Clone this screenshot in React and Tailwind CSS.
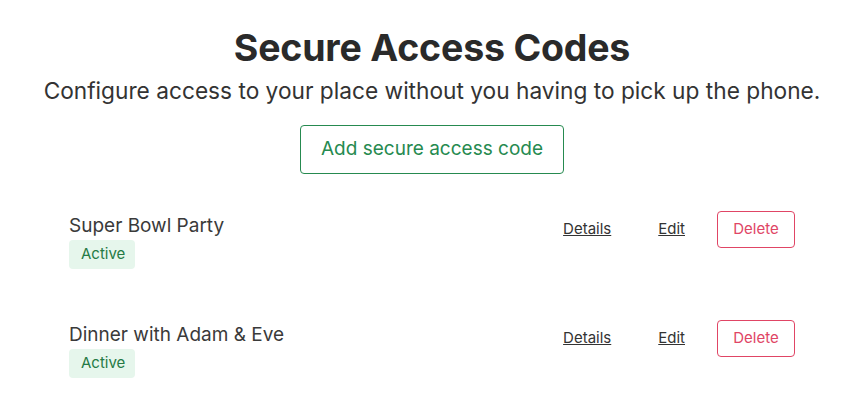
import React from "react";

const codes = [
  { name: "Super Bowl Party", status: "Active" },
  { name: "Dinner with Adam & Eve", status: "Active" },
];

export default function App() {
  return (
    <div
      className="min-h-screen bg-white text-[#333333] pl-[9px]"
      style={{ fontFamily: "Inter, 'Noto Sans', sans-serif" }}
    >
      <div className="flex flex-col items-center pt-[26px]">
        {/* header */}
        <h1 className="text-[37.5px] font-bold leading-[44px] tracking-[-0.2px] text-[#2a2a2a]">
          Secure Access Codes
        </h1>
        <p className="text-[22.7px] leading-[30px] mt-[6px] text-[#333333]">
          Configure access to your place without you having to pick up the phone.
        </p>
        <button className="mt-[19px] h-[49px] px-[20px] rounded-[4px] border border-[#268a50] text-[#268a50] text-[19px]">
          Add secure access code
        </button>
      </div>

      {/* list */}
      <div className="w-[726px] mx-auto mt-[39px] flex flex-col gap-[53px]">
        {codes.map((c, i) => (
          <div key={i} className="flex items-start justify-between">
            <div className="flex flex-col items-start">
              <span className="text-[19px] leading-[26px] text-[#3a3a3a]">
                {c.name}
              </span>
              <span className="mt-[1px] pl-[12px] pr-[10px] h-[29px] flex items-center rounded-[4px] bg-[#e6f6ec] text-[#257a45] text-[15px]">
                {c.status}
              </span>
            </div>
            <div className="flex items-center gap-[48px] mt-[-2px]">
              <a href="#" className="text-[15px] underline text-[#333333]">
                Details
              </a>
              <a href="#" className="text-[15px] underline text-[#333333] -ml-[1px]">
                Edit
              </a>
              <button className="-ml-[16px] w-[78px] h-[37px] rounded-[4px] border border-[#e04565] text-[#e04565] text-[15px]">
                Delete
              </button>
            </div>
          </div>
        ))}
      </div>
    </div>
  );
}
